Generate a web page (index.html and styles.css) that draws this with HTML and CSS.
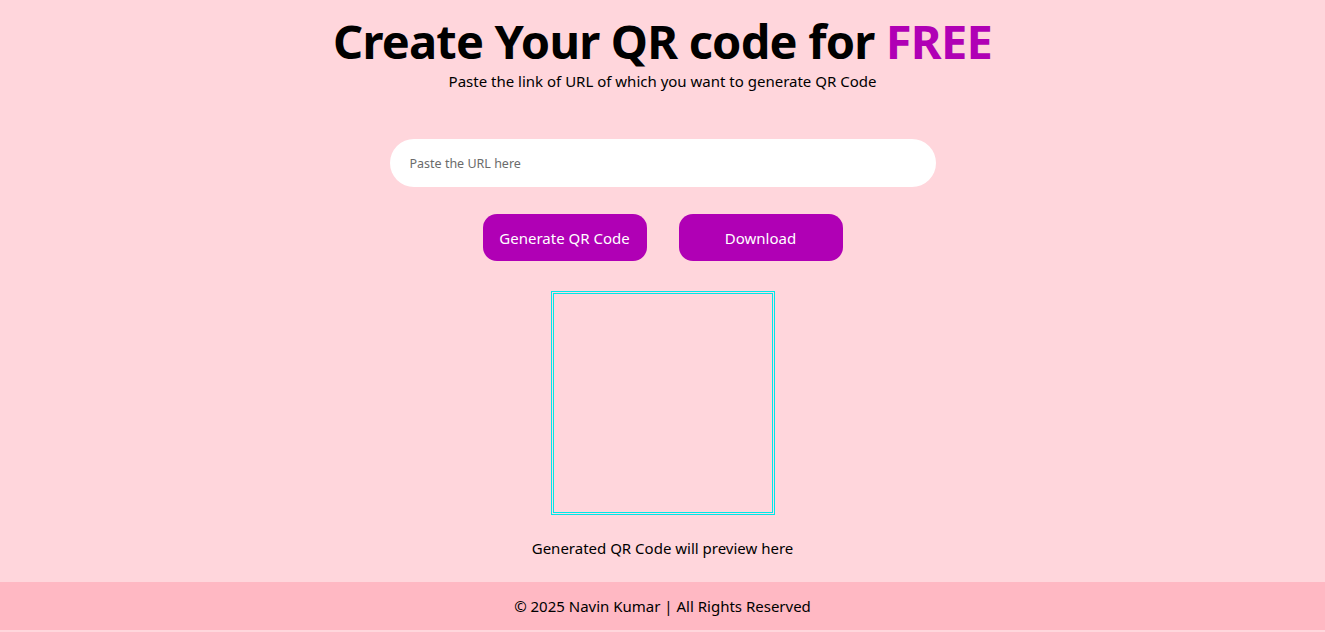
FILE: index.html
```html
<!DOCTYPE html>
<html lang="en">
<head>
<meta charset="utf-8">
<title>QR Code Generator</title>
<link rel="stylesheet" href="styles.css">
</head>
<body>
<main class="main">
  <h1 class="title">Create Your QR code for <span class="accent">FREE</span></h1>
  <p class="subtitle">Paste the link of URL of which you want to generate QR Code</p>
  <input class="url-input" type="text" placeholder="Paste the URL here">
  <div class="actions">
    <button class="btn">Generate QR Code</button>
    <button class="btn">Download</button>
  </div>
  <div class="qr-box"></div>
  <p class="caption">Generated QR Code will preview here</p>
</main>
<footer class="footer">© 2025 Navin Kumar | All Rights Reserved</footer>
</body>
</html>
```
FILE: styles.css
```css
* { box-sizing: border-box; }
html, body { margin: 0; padding: 0; }
body {
  background: #ffd6dc;
  font-family: "Noto Sans", "Open Sans", sans-serif;
  color: #000;
}
.main {
  display: flex;
  flex-direction: column;
  align-items: center;
  padding-top: 12px;
}
.title {
  margin: 0;
  font-size: 47px;
  font-weight: 700;
  line-height: 58px;
  letter-spacing: -0.8px;
}
.accent { color: #b000b5; }
.subtitle {
  margin: 0;
  font-size: 15px;
  line-height: 22px;
}
.url-input {
  margin-top: 47px;
  width: 546px;
  height: 48px;
  border: none;
  border-radius: 24px;
  background: #fff;
  padding: 0 20px;
  font-family: inherit;
  font-size: 12.5px;
  outline: none;
}
.url-input::placeholder { color: #6b6b6b; }
.actions {
  display: flex;
  gap: 32px;
  margin-top: 27px;
}
.btn {
  width: 164px;
  height: 47px;
  border: none;
  border-radius: 14px;
  background: #b000b5;
  color: #fff;
  font-family: inherit;
  font-size: 15px;
  cursor: pointer;
}
.qr-box {
  margin-top: 30px;
  width: 224px;
  height: 224px;
  border: 3px double #00e8e8;
}
.caption {
  margin: 22px 0 0;
  font-size: 15px;
  line-height: 22px;
}
.footer {
  margin-top: 23px;
  height: 48px;
  background: #ffb8c3;
  display: flex;
  align-items: center;
  justify-content: center;
  font-size: 15px;
}
```
